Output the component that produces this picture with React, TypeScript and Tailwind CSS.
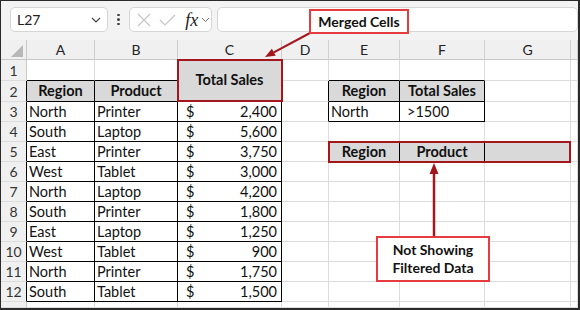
import React from "react";

type Cell = { text?: string; bold?: boolean; gray?: boolean; center?: boolean; money?: string; indent?: boolean };

const DATA = [
  ["North", "Printer", "2,400"],
  ["South", "Laptop", "5,600"],
  ["East", "Printer", "3,750"],
  ["West", "Tablet", "3,000"],
  ["North", "Laptop", "4,200"],
  ["South", "Printer", "1,800"],
  ["East", "Laptop", "1,250"],
  ["West", "Tablet", "900"],
  ["North", "Printer", "1,750"],
  ["South", "Tablet", "1,500"],
];

// [rowFrom, rowTo, colFrom, colTo] with black outlines
const TABLES = [
  [2, 12, 1, 2],
  [1, 12, 3, 3],
  [2, 3, 5, 6],
  [5, 5, 5, 7],
];

const blackRight = (r: number, c: number) =>
  TABLES.some(([r0, r1, c0, c1]) => r >= r0 && r <= r1 && c >= c0 - 1 && c <= c1);
const blackBottom = (r: number, c: number) =>
  TABLES.some(([r0, r1, c0, c1]) => c >= c0 && c <= c1 && r >= r0 - 1 && r <= r1);

function content(r: number, c: number): Cell {
  if (r === 2 && c === 1) return { text: "Region", bold: true, gray: true, center: true };
  if (r === 2 && c === 2) return { text: "Product", bold: true, gray: true, center: true };
  if (r === 2 && c === 5) return { text: "Region", bold: true, gray: true, center: true };
  if (r === 2 && c === 6) return { text: "Total Sales", bold: true, gray: true, center: true };
  if (r === 3 && c === 5) return { text: "North" };
  if (r === 3 && c === 6) return { text: ">1500", indent: true };
  if (r === 5 && c === 5) return { text: "Region", bold: true, gray: true, center: true };
  if (r === 5 && c === 6) return { text: "Product", bold: true, gray: true, center: true };
  if (r === 5 && c === 7) return { gray: true };
  const d = DATA[r - 3];
  if (d && c === 1) return { text: d[0] };
  if (d && c === 2) return { text: d[1] };
  if (d && c === 3) return { money: d[2] };
  return {};
}

function SheetCell({ r, c }: { r: number; c: number }) {
  const br = r === 1 && c === 3 ? 2 : r;
  const right = blackRight(br, c) ? "border-r-black" : c === 0 ? "border-r-[#c8c8c8]" : "border-r-[#dcdcdc]";
  const bottom = blackBottom(br, c) ? "border-b-black" : "border-b-[#dcdcdc]";

  if (c === 0) {
    return (
      <div className={`border-r border-b ${right} ${bottom} bg-[#f0f0f0] flex items-center justify-center pt-px text-[14px] text-[#333] overflow-hidden`}>
        {r <= 12 ? r : ""}
      </div>
    );
  }

  if (r === 1 && c === 3) {
    return (
      <div className={`row-span-2 border-r border-b ${right} ${bottom} bg-[#d9d9d9] flex items-center justify-center font-bold text-[14.5px] text-[#111]`}>
        Total Sales
      </div>
    );
  }

  const cell = content(r, c);
  return (
    <div
      className={`border-r border-b ${right} ${bottom} ${cell.gray ? "bg-[#d9d9d9]" : "bg-white"} flex items-center pt-px overflow-hidden text-[14.5px] text-[#111] ${
        cell.center ? "justify-center" : cell.indent ? "pl-[7px]" : "pl-[2px]"
      } ${cell.bold ? "font-bold" : ""}`}
    >
      {cell.money ? (
        <div className="flex w-full justify-between pl-[6px] pr-[4px]">
          <span>$</span>
          <span>{cell.money}</span>
        </div>
      ) : (
        cell.text
      )}
    </div>
  );
}

function Toolbar() {
  return (
    <div className="h-[39px] bg-[#f3f3f3] flex items-start pt-[6px] pl-[9px] gap-0">
      <div className="w-[100px] h-[25px] bg-white border border-[#d6d6d6] rounded-[5px] flex items-center justify-between pl-[6px] pr-[6px] text-[14px] text-[#222]">
        <span>L27</span>
        <svg width="10" height="6" viewBox="0 0 10 6">
          <polyline points="1,1 5,5 9,1" fill="none" stroke="#444" strokeWidth="1.2" />
        </svg>
      </div>
      <div className="w-[22px] h-[25px] flex flex-col items-center justify-center gap-[2px]">
        <span className="w-[2.5px] h-[2.5px] rounded-full bg-[#444]" />
        <span className="w-[2.5px] h-[2.5px] rounded-full bg-[#444]" />
        <span className="w-[2.5px] h-[2.5px] rounded-full bg-[#444]" />
      </div>
      <div className="w-[85px] h-[25px] bg-white border border-[#d6d6d6] rounded-[5px] flex items-center pl-[7px] text-[#222]">
        <svg width="14" height="14" viewBox="0 0 14 14">
          <path d="M1 1 L13 13 M13 1 L1 13" stroke="#c4c4c4" strokeWidth="1.1" />
        </svg>
        <svg width="17" height="14" viewBox="0 0 17 14" className="ml-[8px]">
          <polyline points="1,7 6,12 16,2" fill="none" stroke="#c4c4c4" strokeWidth="1.1" />
        </svg>
        <span className="ml-[9px] italic font-['Liberation_Serif',serif] text-[18px] leading-none">fx</span>
        <svg width="9" height="6" viewBox="0 0 9 6" className="ml-[3px]">
          <polyline points="1,1 4.5,4.5 8,1" fill="none" stroke="#777" strokeWidth="1" />
        </svg>
      </div>
      <div className="ml-[5px] w-[370px] h-[25px] bg-white border border-[#d6d6d6] rounded-[5px]" />
    </div>
  );
}

function ColumnHeader() {
  const letters = ["A", "B", "C", "D", "E", "F", "G", ""];
  return (
    <>
      <div className="border-r border-b border-r-[#c8c8c8] border-b-[#c8c8c8] bg-[#f0f0f0] relative">
        <svg width="12" height="12" viewBox="0 0 12 12" className="absolute right-[3px] bottom-[2px]">
          <polygon points="12,0 12,12 0,12" fill="#b8b8b8" />
        </svg>
      </div>
      {letters.map((l, i) => (
        <div
          key={i}
          className="border-r border-b border-r-[#d0d0d0] border-b-[#c8c8c8] bg-[#f0f0f0] flex items-center justify-center pt-px text-[14px] text-[#222]"
        >
          {l}
        </div>
      ))}
    </>
  );
}

export default function App() {
  const rows = Array.from({ length: 13 }, (_, i) => i + 1);
  const cols = [0, 1, 2, 3, 4, 5, 6, 7, 8];

  return (
    <div className="relative w-[580px] h-[310px] overflow-hidden bg-white border-l border-t border-r-2 border-b-2 border-[#2a2a2a] font-['Lato',sans-serif] leading-none">
      <Toolbar />
      <div className="grid grid-cols-[26px_68px_83px_104px_47px_71px_85px_86px_1fr] grid-rows-[20px_21px_21px_repeat(10,20px)_1fr] h-[268px]">
        <ColumnHeader />
        {rows.map((r) =>
          cols.map((c) => (r === 2 && c === 3 ? null : <SheetCell key={`${r}-${c}`} r={r} c={c} />))
        )}
      </div>

      {/* red frames */}
      <div className="absolute left-[176px] top-[58px] w-[106px] h-[43px] border-2 border-[#a3161c] pointer-events-none" />
      <div className="absolute left-[327px] top-[140px] w-[243px] h-[22px] border-2 border-[#a3161c] pointer-events-none" />

      {/* arrows */}
      <svg className="absolute -left-px -top-px pointer-events-none" width="580" height="310" viewBox="0 0 580 310">
        <line x1="310" y1="33" x2="273.8" y2="52.3" stroke="#a3161c" strokeWidth="2" />
        <polygon points="265,57 275.7,55.8 271.9,48.8" fill="#a3161c" />
        <line x1="434" y1="236" x2="434" y2="172" stroke="#a3161c" strokeWidth="2.5" />
        <polygon points="434,163 429.5,174 438.5,174" fill="#a3161c" />
      </svg>

      {/* callouts */}
      <div className="absolute left-[308px] top-[8px] w-[100px] h-[25px] border-2 border-[#e63b3f] bg-white flex items-center justify-center font-bold text-[14px] text-[#111]">
        Merged Cells
      </div>
      <div className="absolute left-[375px] top-[235px] w-[114px] h-[46px] border-2 border-[#e63b3f] bg-white flex flex-col items-center justify-center font-bold text-[14px] text-[#111] leading-[18px]">
        <span>Not Showing</span>
        <span>Filtered Data</span>
      </div>
    </div>
  );
}
